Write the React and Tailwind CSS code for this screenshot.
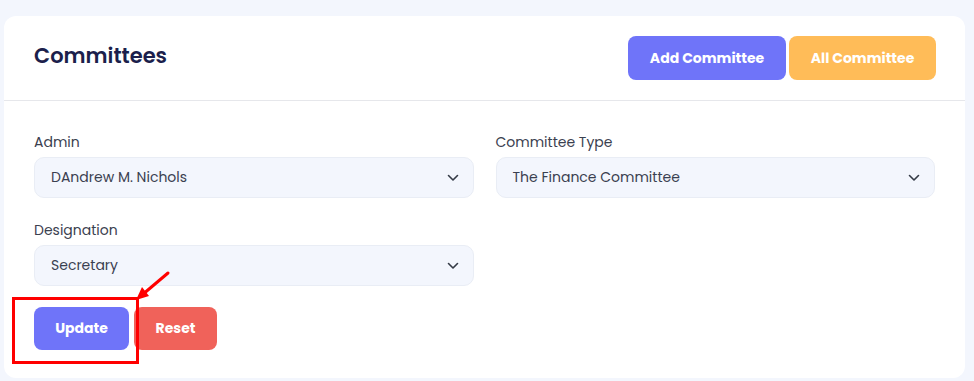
import React from "react";

const font = { fontFamily: "Poppins, Inter, 'Noto Sans', sans-serif" };

function Chevron() {
  return (
    <svg width="12" height="8" viewBox="0 0 12 8" fill="none" className="shrink-0">
      <path d="M1.5 1.5 6 6l4.5-4.5" stroke="#343a46" strokeWidth="1.6" strokeLinecap="round" strokeLinejoin="round" />
    </svg>
  );
}

function SelectField({ label, value }) {
  return (
    <div>
      <div className="text-[14px] leading-5 text-[#3b4150] mb-[5px]">{label}</div>
      <div className="h-[41px] flex items-center justify-between pl-[16px] pr-[14px] rounded-[10px] bg-[#f3f6fd] border border-[#e9edf5] text-[14px] text-[#3a4050]">
        <span>{value}</span>
        <Chevron />
      </div>
    </div>
  );
}

export default function App() {
  return (
    <div className="h-[381px] bg-[#f3f6fd] pt-4 pl-1 pr-[9px] overflow-hidden" style={font}>
      <div className="relative bg-white rounded-xl h-[362px]">
        <div className="h-[85px] flex items-center justify-between pl-[30px] pr-[29px] border-b border-[#e6e7eb]">
          <h1 className="text-[21px] font-semibold text-[#1c1f4c] -mt-[4px]">Committees</h1>
          <div className="flex gap-[3px]">
            <button className="h-[44px] w-[158px] rounded-lg bg-[#6f74f9] text-white text-[14px] font-bold">
              Add Committee
            </button>
            <button className="h-[44px] w-[147px] rounded-lg bg-[#ffbc58] text-white text-[14px] font-bold">
              All Committee
            </button>
          </div>
        </div>

        <div className="px-[30px] pt-[31px]">
          <div className="grid grid-cols-2 gap-x-[22px] gap-y-[22px]">
            <SelectField label="Admin" value="DAndrew M. Nichols" />
            <SelectField label="Committee Type" value="The Finance Committee" />
            <SelectField label="Designation" value="Secretary" />
          </div>
          <div className="flex gap-[5px] mt-[21px]">
            <button className="h-[43px] w-[95px] rounded-lg bg-[#6f74f9] text-white text-[14px] font-bold">
              Update
            </button>
            <button className="h-[43px] w-[83px] rounded-lg bg-[#f0625a] text-white text-[14px] font-bold">
              Reset
            </button>
          </div>
        </div>

        {/* annotation */}
        <div className="absolute left-[8px] top-[281px] w-[127px] h-[67px] border-[3px] border-[#ff0000]" />
        <svg className="absolute left-[126px] top-[253px]" width="44" height="36" viewBox="0 0 44 36" fill="none">
          <path d="M38 4 L12 26" stroke="#ff0000" strokeWidth="3" strokeLinecap="round" />
          <path d="M6 31 L12 18 L19 27 Z" fill="#ff0000" />
        </svg>
      </div>
    </div>
  );
}
